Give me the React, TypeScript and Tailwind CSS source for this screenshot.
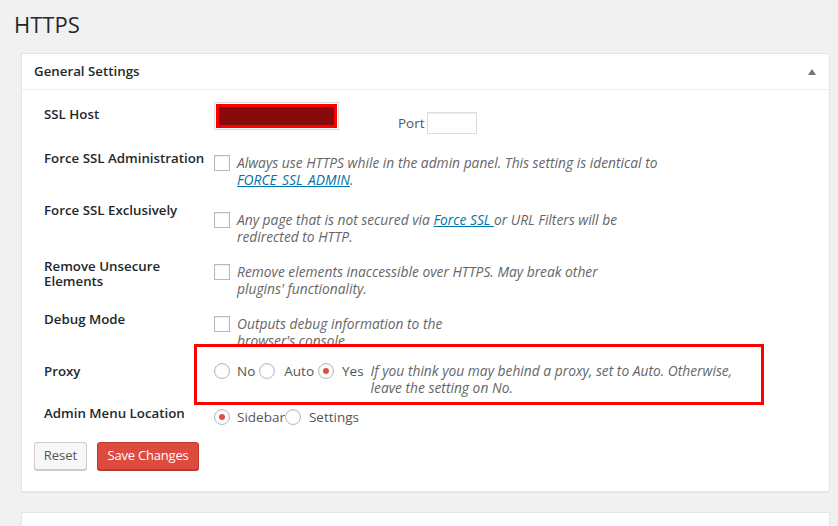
import type { ReactNode } from "react";

const LINK = "text-[#0073aa] underline";

function Checkbox() {
  return (
    <span className="block w-4 h-4 shrink-0 border border-[#b4b9be] bg-white shadow-[inset_0_1px_2px_rgba(0,0,0,0.07)]" />
  );
}

function Radio({ checked }: { checked?: boolean }) {
  return (
    <span className="flex items-center justify-center w-4 h-4 shrink-0 rounded-full border border-[#b4b9be] bg-white shadow-[inset_0_1px_2px_rgba(0,0,0,0.07)]">
      {checked && <span className="block w-[6px] h-[6px] rounded-full bg-[#e14d43]" />}
    </span>
  );
}

interface RowProps {
  label: ReactNode;
  height: number;
  labelTop: string;
  contentTop: string;
  children: ReactNode;
}

function Row({ label, height, labelTop, contentTop, children }: RowProps) {
  return (
    <div className="flex" style={{ height }}>
      <div className={`w-[170px] shrink-0 text-[13.3px] font-semibold text-[#23282d] ${labelTop}`}>{label}</div>
      <div className={`flex-1 ${contentTop}`}>{children}</div>
    </div>
  );
}

function CheckRow({ lines }: { lines: ReactNode }) {
  return (
    <div className="flex items-start gap-[7px]">
      <Checkbox />
      <p className="italic text-[13.8px] leading-[17px] text-[#666] whitespace-nowrap mt-[-1px]">{lines}</p>
    </div>
  );
}

export default function App() {
  return (
    <div className="h-[526px] overflow-hidden bg-[#f1f1f1] font-['Open_Sans',sans-serif] text-[#444]">
      <h1 className="pl-[14px] pt-[10px] text-[22px] leading-[29px] font-normal text-[#23282d]">HTTPS</h1>

      <div className="relative mt-[14px] ml-[21px] w-[809px] border border-[#e5e5e5] bg-white shadow-[0_1px_1px_rgba(0,0,0,0.04)]">
        <div className="flex h-[36px] items-center justify-between border-b border-[#eee] pl-[12px] pr-[13px]">
          <span className="text-[13.3px] font-semibold text-[#23282d]">General Settings</span>
          <span className="block w-0 h-0 border-l-[4px] border-r-[4px] border-b-[6px] border-l-transparent border-r-transparent border-b-[#72777c]" />
        </div>

        <div className="pl-[22px] pb-[21px]">
          <Row label="SSL Host" height={55} labelTop="pt-[15px] leading-[18px]" contentTop="pt-[12px]">
            <div className="flex items-start">
              <div className="w-[125px] h-[28px] border border-[#ddd] bg-white p-px">
                <div className="h-full border-[3px] border-[#ff0000] bg-[#870b0b]" />
              </div>
              <div className="ml-[59px] mt-[10px] flex items-center gap-[2px]">
                <span className="text-[13.5px] text-[#555]">Port</span>
                <span className="block w-[50px] h-[22px] border border-[#ddd] bg-white shadow-[inset_0_1px_2px_rgba(0,0,0,0.07)]" />
              </div>
            </div>
          </Row>

          <Row label="Force SSL Administration" height={52} labelTop="pt-[4px] leading-[18px]" contentTop="pt-[10px]">
            <CheckRow
              lines={
                <>
                  Always use HTTPS while in the admin panel. This setting is identical to
                  <br />
                  <a className={LINK}>FORCE_SSL_ADMIN</a>.
                </>
              }
            />
          </Row>

          <Row label="Force SSL Exclusively" height={55} labelTop="pt-[4px] leading-[18px]" contentTop="pt-[15px]">
            <CheckRow
              lines={
                <>
                  Any page that is not secured via <a className={LINK}>Force SSL </a>or URL Filters will be
                  <br />
                  redirected to HTTP.
                </>
              }
            />
          </Row>

          <Row
            label={
              <>
                Remove Unsecure
                <br />
                Elements
              </>
            }
            height={56}
            labelTop="pt-[7px] leading-[15px]"
            contentTop="pt-[12px]"
          >
            <CheckRow
              lines={
                <>
                  Remove elements inaccessible over HTTPS. May break other
                  <br />
                  plugins' functionality.
                </>
              }
            />
          </Row>

          <Row label="Debug Mode" height={45} labelTop="pt-[2px] leading-[18px]" contentTop="pt-[8px]">
            <CheckRow
              lines={
                <>
                  Outputs debug information to the
                  <br />
                  browser's console.
                </>
              }
            />
          </Row>

          <Row label="Proxy" height={46} labelTop="pt-[9px] leading-[18px]" contentTop="pt-[10px]">
            <div className="flex items-start text-[13.5px] text-[#555]">
              <div className="flex h-4 items-center">
                <Radio />
                <span className="ml-[7px] leading-4">No</span>
                <span className="ml-[4px]"><Radio /></span>
                <span className="ml-[9px] leading-4">Auto</span>
                <span className="ml-[4px]"><Radio checked /></span>
                <span className="ml-[8px] leading-4">Yes</span>
              </div>
              <p className="ml-[7px] mt-[-1px] italic text-[13.8px] leading-[17px] text-[#666] whitespace-nowrap">
                If you think you may behind a proxy, set to Auto. Otherwise,
                <br />
                leave the setting on No.
              </p>
            </div>
          </Row>

          <Row label="Admin Menu Location" height={37} labelTop="pt-[5px] leading-[18px]" contentTop="pt-[10px]">
            <div className="flex h-4 items-center text-[13.5px] text-[#555]">
              <Radio checked />
              <span className="ml-[7px] leading-4">Sidebar</span>
              <Radio />
              <span className="ml-[8px] leading-4">Settings</span>
            </div>
          </Row>

          <div className="ml-[-10px] mt-[6px] flex gap-[10px]">
            <button className="h-[28px] w-[53px] rounded-[3px] border border-[#ccc] bg-[#f7f7f7] text-[13px] text-[#555] shadow-[0_1px_0_#ccc]">
              Reset
            </button>
            <button className="h-[28px] w-[102px] rounded-[3px] border border-[#c0392b] bg-[#dd4b3f] text-[13px] tracking-[-0.2px] text-white shadow-[0_1px_0_#b53a2f]">
              Save Changes
            </button>
          </div>
        </div>

        <div className="pointer-events-none absolute left-[172px] top-[290px] w-[570px] h-[61px] border-[3px] border-[#ff0000]" />
      </div>

      <div className="mt-[20px] ml-[21px] w-[809px] h-[40px] border border-[#e5e5e5] bg-white" />
    </div>
  );
}
